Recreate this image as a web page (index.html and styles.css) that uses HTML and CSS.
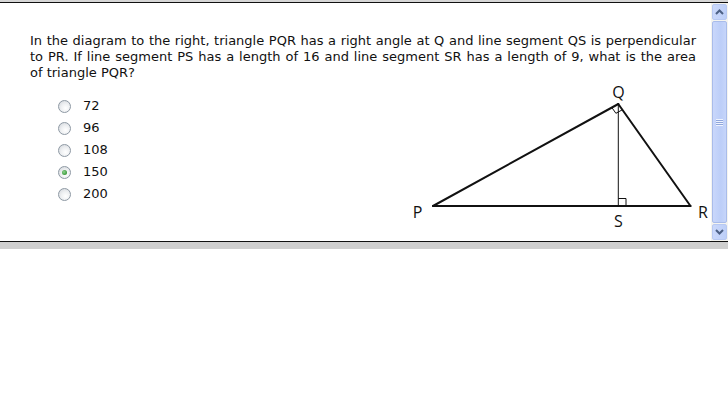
FILE: index.html
```html
<!DOCTYPE html>
<html>
<head>
<meta charset="utf-8">
<link rel="stylesheet" href="styles.css">
</head>
<body>
<div class="topband"></div>
<div class="frame">
  <div class="content">
    <p class="question">In the diagram to the right, triangle PQR has a right angle at Q and line segment QS is perpendicular to PR. If line segment PS has a length of 16 and line segment SR has a length of 9, what is the area <span class="nowrap">of triangle PQR?</span></p>
    <div class="row">
      <ul class="options">
        <li class="option"><span class="radio"></span><span class="label">72</span></li>
        <li class="option"><span class="radio"></span><span class="label">96</span></li>
        <li class="option"><span class="radio"></span><span class="label">108</span></li>
        <li class="option"><span class="radio checked"></span><span class="label">150</span></li>
        <li class="option"><span class="radio"></span><span class="label">200</span></li>
      </ul>
      <svg class="figure" width="311" height="150" viewBox="400 81 311 150">
        <g stroke="#111" fill="none" stroke-linecap="round">
          <line x1="433" y1="206" x2="690.5" y2="206" stroke-width="2"/>
          <line x1="433" y1="206" x2="618.3" y2="104" stroke-width="2"/>
          <line x1="618.3" y1="104" x2="690.5" y2="206" stroke-width="2"/>
          <line x1="618.3" y1="104" x2="618.3" y2="206" stroke-width="1"/>
          <polyline points="618.3,198.5 626,198.5 626,206" stroke-width="1" stroke-linecap="butt"/>
          <polyline points="611.9,107.6 615.9,113.3 622.3,109.8" stroke-width="1" stroke-linecap="butt"/>
        </g>
        <g class="vlabel" fill="#111" text-anchor="middle">
          <text x="417.5" y="218">P</text>
          <text x="618.5" y="97.5">Q</text>
          <text x="618.5" y="226.5">S</text>
          <text x="703" y="218">R</text>
        </g>
      </svg>
    </div>
  </div>
  <div class="scrollbar">
    <div class="sbtn up"><svg width="9" height="6" viewBox="0 0 9 6"><polyline points="1,5 4.5,1.5 8,5" fill="none" stroke="#4d6185" stroke-width="2"/></svg></div>
    <div class="thumb"><span class="grip"></span></div>
    <div class="sbtn down"><svg width="9" height="6" viewBox="0 0 9 6"><polyline points="1,1 4.5,4.5 8,1" fill="none" stroke="#4d6185" stroke-width="2"/></svg></div>
  </div>
</div>
<div class="bottomband"></div>
</body>
</html>
```
FILE: styles.css
```css
html, body {
  margin: 0;
  padding: 0;
  background: #fff;
}
.topband {
  height: 2px;
  background: #d6d6d6;
  border-bottom: 1px solid #111;
}
.frame {
  display: flex;
  height: 238px;
  border-bottom: 1px solid #111;
}
.content {
  flex: 1;
  padding: 30px 15px 0 30px;
  font-family: "DejaVu Sans", Verdana, sans-serif;
  font-size: 13px;
  color: #111;
  overflow: hidden;
}
.question {
  margin: 0;
  line-height: 16px;
  text-align: justify;
}
.nowrap {
  white-space: nowrap;
}
.row {
  display: flex;
  align-items: flex-start;
}
.options {
  list-style: none;
  margin: 14px 0 0 28px;
  padding: 0;
}
.option {
  display: flex;
  align-items: center;
  height: 22px;
  line-height: 22px;
}
.radio {
  width: 11px;
  height: 11px;
  border: 1px solid #8e99a4;
  border-radius: 50%;
  background: radial-gradient(circle at 60% 65%, #ffffff 0%, #eef0f2 45%, #cfd3d8 100%);
  margin-right: 12px;
  position: relative;
  flex: none;
}
.radio.checked::after {
  content: "";
  position: absolute;
  left: 3px;
  top: 3px;
  width: 5px;
  height: 5px;
  border-radius: 50%;
  background: radial-gradient(circle at 40% 40%, #8fd48f 0%, #3a9a3a 70%, #2b7a2b 100%);
}
.figure {
  display: block;
  margin-left: auto;
  margin-right: -15px;
}
.vlabel {
  font-family: "Open Sans", "DejaVu Sans", sans-serif;
  font-size: 16px;
}
.scrollbar {
  width: 17px;
  flex: none;
  display: flex;
  flex-direction: column;
  background: #f4f4f0;
  padding: 1px 1px 1px 1px;
  box-sizing: border-box;
}
.sbtn {
  height: 16px;
  flex: none;
  box-sizing: border-box;
  border: 1px solid #b8c9f2;
  border-radius: 2px;
  background: linear-gradient(to right, #cad8fb, #bdcff8);
  display: flex;
  align-items: center;
  justify-content: center;
}
.thumb {
  flex: 1;
  margin: 1px 0;
  box-sizing: border-box;
  border: 1px solid #a9bcea;
  border-radius: 2px;
  background: linear-gradient(to right, #c9d7fb, #bccef8 60%, #c6d5fa);
  display: flex;
  align-items: center;
  justify-content: center;
}
.grip {
  width: 7px;
  height: 7px;
  background: repeating-linear-gradient(to bottom, #eef3fe 0, #eef3fe 1px, #8fa6dc 1px, #8fa6dc 2px);
}
.bottomband {
  height: 7px;
  background: #cfcfcf;
}
```
